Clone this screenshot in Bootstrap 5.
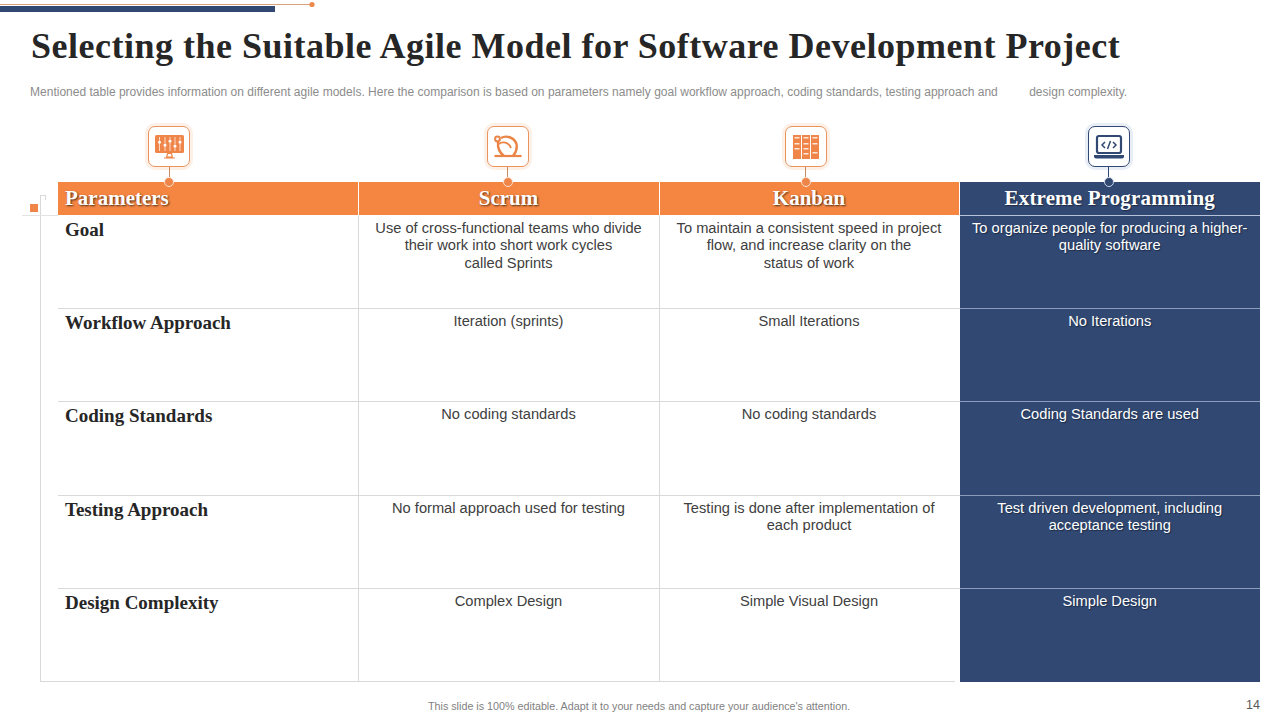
<!DOCTYPE html>
<html lang="en">
<head>
    <meta charset="UTF-8">
    <meta name="viewport" content="width=device-width, initial-scale=1.0">
    <title>Selecting the Suitable Agile Model</title>
    <link href="https://cdn.jsdelivr.net/npm/bootstrap@5.3.0/dist/css/bootstrap.min.css" rel="stylesheet">
    <script src="https://cdn.jsdelivr.net/npm/bootstrap@5.3.0/dist/js/bootstrap.bundle.min.js"></script>
    <style>
        body { width: 1280px; height: 720px; overflow: hidden; background: #fff; font-family: "Liberation Sans", Arial, sans-serif; color: #404040; }
        .top-decor { display: block; height: 12px; }
        .slide-title { font-family: "Liberation Serif", serif; font-weight: 700; font-size: 36px; line-height: 42px; letter-spacing: .5px; color: #262626; margin: 13px 0 0 31px; white-space: nowrap; }
        .slide-sub { font-size: 12px; line-height: 16px; letter-spacing: .012px; color: #8c8c8c; margin: 17px 0 0 30px; white-space: nowrap; }
        .slide-sub .gap { display: inline-block; width: 28px; }
        .icon-row { display: grid; grid-template-columns: 300px 301px 300px 301px; margin: 26px 0 0 58px; height: 56px; }
        .icon-col { display: flex; flex-direction: column; align-items: center; }
        .icon-col.first { margin-right: 78px; }
        .icon-col.second, .icon-col.navy { margin-right: 2px; }
        .icon-col.third { margin-right: 7px; }
        .tile { width: 42px; height: 41px; border: 1px solid #e9945f; border-radius: 7px; box-shadow: 0 0 0 3px #fdf0e7; background: #fff; display: flex; align-items: center; justify-content: center; flex: none; }
        .stem { width: 1px; height: 10px; background: #c98a62; flex: none; }
        .dot { width: 10px; height: 10px; border-radius: 50%; background: #f0854a; border: 1px solid #fbe3d3; position: relative; z-index: 2; flex: none; }
        .navy .tile { border-color: #314872; box-shadow: 0 0 0 3px #e9edf6; }
        .navy .stem { background: #314872; }
        .navy .dot { background: #314872; border-color: #cdd6e8; }
        .table-wrap { position: relative; margin-left: 58px; width: 1202px; }
        .agile-table { table-layout: fixed; width: 1202px; margin: 0; border-collapse: collapse; }
        .agile-table th, .agile-table td { padding: 0; border: 0; background: transparent; box-shadow: none; }
        .agile-table thead th { height: 33px; background: #f58642; color: #fff; font-family: "Liberation Serif", serif; font-size: 21px; line-height: 31px; font-weight: 700; text-align: center; text-shadow: 1px 1px 2px #4a2d15; border-left: 1px solid #fff; border-bottom: 1px solid #fff; vertical-align: middle; }
        .agile-table thead th:first-child { text-align: left; padding-left: 7px; border-left: 0; }
        .agile-table thead th.xp { background: #314872; text-shadow: 1px 1px 1px #1c2b47; border-bottom-color: #b6c2da; letter-spacing: .15px; }
        .agile-table tbody tr { height: 93.4px; }
        .agile-table tbody th, .agile-table tbody td { vertical-align: top; border-bottom: 1px solid #d9d9d9; }
        .agile-table tbody tr:last-child th, .agile-table tbody tr:last-child td { border-bottom: 0; }
        .agile-table tbody th { font-family: "Liberation Serif", serif; font-size: 19px; line-height: 24px; font-weight: 700; color: #262626; padding: 2px 0 0 7px; }
        .agile-table tbody td { font-size: 14.67px; line-height: 17.6px; color: #404040; text-align: center; padding: 4px 10px 0; border-left: 1px solid #d9d9d9; }
        .agile-table tbody td.xp { background: #314872; color: #fff; text-shadow: 1px 1px 1px #1c2b47; border-left: 1px solid #fff; border-bottom-color: #8d9cba; }
        .line-v { position: absolute; left: -18px; top: 14px; bottom: 0; width: 1px; background: #d9d9d9; }
        .line-h { position: absolute; left: -36px; top: 33px; width: 36px; height: 1px; background: #e2e2e2; }
        .line-tick { position: absolute; left: -18px; top: 13px; width: 6px; height: 5px; border-top: 1px solid #d9d9d9; border-right: 1px solid #d9d9d9; }
        .line-b { position: absolute; left: -18px; bottom: 0; width: 915px; height: 1px; background: #d9d9d9; }
        .mark { position: absolute; left: -28px; top: 22px; width: 8px; height: 8px; background: #f0854a; }
        .slide-foot { display: grid; grid-template-columns: 1fr auto; margin: 16px 20px 0 0; align-items: center; }
        .foot-note { font-size: 10.75px; line-height: 16px; color: #7f7f7f; text-align: center; padding-left: 32px; }
        .page-no { font-size: 12.5px; line-height: 16px; color: #595959; margin-top: -2px; }
    </style>
</head>
<body>
    <svg class="top-decor" width="320" height="12" viewBox="0 0 320 12">
        <rect x="0" y="4" width="310" height="1" fill="#d9a27c"/>
        <circle cx="312" cy="4.5" r="2.600" fill="#ec8a4e"/>
        <rect x="0" y="6" width="275" height="6" fill="#314872"/>
    </svg>

    <h1 class="slide-title">Selecting the Suitable Agile Model for Software Development Project</h1>
    <p class="slide-sub">Mentioned table provides information on different agile models. Here the comparison is based on parameters namely goal workflow approach, coding standards, testing approach and <span class="gap"></span>design complexity.</p>

    <div class="icon-row">
        <div class="icon-col first">
            <div class="tile">
                <svg width="32" height="30" viewBox="0 0 32 30">
                    <rect x="2" y="3" width="29" height="18" rx="1.500" fill="#f0854a"/>
                    <path d="M6.500 5v14M12 5v14M17 5v14M22 5v14M27 5v14" stroke="#fde3d2" stroke-width=".9"/>
                    <g fill="#fff">
                        <rect x="5" y="9" width="3" height="2.500" rx="1"/>
                        <rect x="10.500" y="12" width="3" height="2.500" rx="1"/>
                        <rect x="15.500" y="8" width="3" height="2.500" rx="1"/>
                        <rect x="20.500" y="13" width="3" height="2.500" rx="1"/>
                        <rect x="25.500" y="9" width="3" height="2.500" rx="1"/>
                    </g>
                    <path d="M14.500 21.500h4l.8 3.500h-5.600zM11 26h11" fill="none" stroke="#f0854a" stroke-width="1.200"/>
                </svg>
            </div>
            <div class="stem"></div><div class="dot"></div>
        </div>
        <div class="icon-col second">
            <div class="tile">
                <svg width="32" height="30" viewBox="0 0 32 30">
                    <path d="M2.500 24H29.500" fill="none" stroke="#ea8447" stroke-width="2.200"/>
                    <path d="M9 6C14 3 22 5 24.500 12 25.500 17 23.500 21 21 24" fill="none" stroke="#ea8447" stroke-width="2.400"/>
                    <path d="M6 10C5.500 16 8 21 12 24" fill="none" stroke="#ea8447" stroke-width="2.400"/>
                    <path d="M7 12C10 9 17 10 19 16" fill="none" stroke="#ea8447" stroke-width="1.800"/>
                    <circle cx="5.500" cy="7" r="2.400" fill="none" stroke="#ea8447" stroke-width="2"/>
                </svg>
            </div>
            <div class="stem"></div><div class="dot"></div>
        </div>
        <div class="icon-col third">
            <div class="tile">
                <svg width="30" height="30" viewBox="0 0 30 30">
                    <rect x="2" y="3" width="8" height="24" fill="#f0854a"/>
                    <rect x="11" y="3" width="8" height="24" fill="#f0854a"/>
                    <rect x="20" y="3" width="8" height="24" fill="#f0854a"/>
                    <g fill="#fde7d9">
                        <rect x="3.500" y="5" width="5" height="1.500"/><rect x="12.500" y="5" width="5" height="1.500"/><rect x="21.500" y="5" width="5" height="1.500"/>
                        <rect x="3.500" y="11" width="5" height="1.500"/><rect x="12.500" y="11" width="5" height="1.500"/><rect x="21.500" y="11" width="5" height="1.500"/>
                        <rect x="3.500" y="16" width="5" height="1.500"/><rect x="12.500" y="16" width="5" height="1.500"/><rect x="21.500" y="20" width="5" height="1.500"/>
                        <rect x="12.500" y="21" width="5" height="1.500"/>
                    </g>
                </svg>
            </div>
            <div class="stem"></div><div class="dot"></div>
        </div>
        <div class="icon-col navy">
            <div class="tile">
                <svg width="32" height="30" viewBox="0 0 32 30">
                    <rect x="4" y="4" width="24" height="17" rx="2" fill="none" stroke="#314872" stroke-width="2.200"/>
                    <path d="M1 23h30v1.500a2 2 0 0 1-2 2H3a2 2 0 0 1-2-2z" fill="#314872"/>
                    <path d="M12 10l-3 3 3 3M20 10l3 3-3 3M17.500 9l-3 8" fill="none" stroke="#314872" stroke-width="1.500"/>
                </svg>
            </div>
            <div class="stem"></div><div class="dot"></div>
        </div>
    </div>

    <div class="table-wrap">
        <div class="line-v"></div>
        <div class="line-tick"></div>
        <div class="line-h"></div>
        <div class="mark"></div>
        <table class="table agile-table">
            <colgroup><col style="width:300px"><col style="width:301px"><col style="width:300px"><col style="width:301px"></colgroup>
            <thead>
                <tr><th>Parameters</th><th>Scrum</th><th>Kanban</th><th class="xp">Extreme Programming</th></tr>
            </thead>
            <tbody>
                <tr>
                    <th>Goal</th>
                    <td>Use of cross-functional teams who divide their work into short work cycles<br>called Sprints</td>
                    <td>To maintain a consistent speed in project flow, and increase clarity on the<br>status of work</td>
                    <td class="xp">To organize people for producing a higher-quality software</td>
                </tr>
                <tr>
                    <th>Workflow Approach</th>
                    <td>Iteration (sprints)</td>
                    <td>Small Iterations</td>
                    <td class="xp">No Iterations</td>
                </tr>
                <tr>
                    <th>Coding Standards</th>
                    <td>No coding standards</td>
                    <td>No coding standards</td>
                    <td class="xp">Coding Standards are used</td>
                </tr>
                <tr>
                    <th>Testing Approach</th>
                    <td>No formal approach used for testing</td>
                    <td>Testing is done after implementation of each product</td>
                    <td class="xp">Test driven development, including acceptance testing</td>
                </tr>
                <tr>
                    <th>Design Complexity</th>
                    <td>Complex Design</td>
                    <td>Simple Visual Design</td>
                    <td class="xp">Simple Design</td>
                </tr>
            </tbody>
        </table>
        <div class="line-b"></div>
    </div>

    <div class="slide-foot">
        <div class="foot-note">This slide is 100% editable. Adapt it to your needs and capture your audience's attention.</div>
        <div class="page-no">14</div>
    </div>
</body>
</html>
